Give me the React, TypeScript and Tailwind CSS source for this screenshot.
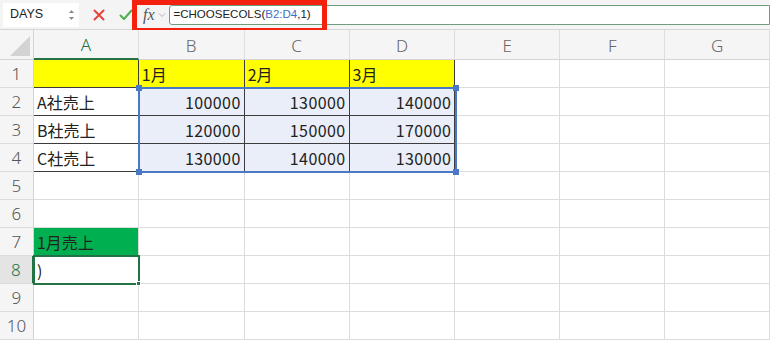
import React from "react";

const COLS = ["A", "B", "C", "D", "E", "F", "G"];
const COLW = [105, 106, 105, 106, 105, 105, 105];

type Cell = { t?: string; right?: boolean; bg?: string; table?: boolean; sel?: boolean };

const data: Record<string, Cell> = {
  A1: { bg: "bg-[#ffff00]", table: true },
  B1: { t: "1月", bg: "bg-[#ffff00]", table: true },
  C1: { t: "2月", bg: "bg-[#ffff00]", table: true },
  D1: { t: "3月", bg: "bg-[#ffff00]", table: true },
  A2: { t: "A社売上", table: true },
  A3: { t: "B社売上", table: true },
  A4: { t: "C社売上", table: true },
  B2: { t: "100000", right: true, table: true, sel: true },
  C2: { t: "130000", right: true, table: true, sel: true },
  D2: { t: "140000", right: true, table: true, sel: true },
  B3: { t: "120000", right: true, table: true, sel: true },
  C3: { t: "150000", right: true, table: true, sel: true },
  D3: { t: "170000", right: true, table: true, sel: true },
  B4: { t: "130000", right: true, table: true, sel: true },
  C4: { t: "140000", right: true, table: true, sel: true },
  D4: { t: "130000", right: true, table: true, sel: true },
  A7: { t: "1月売上", bg: "bg-[#00b050]" },
  A8: { t: ")" },
};

const cellFont = { fontFamily: '"Noto Sans CJK JP", "Noto Sans", sans-serif' };

export default function App() {
  return (
    <div className="relative w-[770px] h-[341px] overflow-hidden bg-white">
      {/* toolbar */}
      <div className="h-[30px] flex items-center bg-[#f4f4f4] border-b border-[#d6d6d6]" style={{ fontFamily: '"Liberation Sans", Arial, sans-serif' }}>
        <div className="ml-[3px] w-[76px] h-[24px] bg-white flex items-center justify-between pl-[7px] pr-[4px]">
          <span className="text-[12.5px] text-[#222]">DAYS</span>
          <svg width="7" height="14" viewBox="0 0 7 14">
            <path d="M1 5 L3.5 2 L6 5 Z" fill="#8a8a8a" />
            <path d="M1 9 L3.5 12 L6 9 Z" fill="#8a8a8a" />
          </svg>
        </div>
        <div className="ml-[13px] w-[14px] flex items-center justify-center">
          <svg width="12" height="12" viewBox="0 0 12 12">
            <path d="M1.5 1.5 L10.5 10.5 M10.5 1.5 L1.5 10.5" stroke="#e5433d" strokeWidth="2" strokeLinecap="round" />
          </svg>
        </div>
        <div className="ml-[13px] w-[14px] flex items-center justify-center">
          <svg width="14" height="12" viewBox="0 0 14 12">
            <path d="M1.5 6.5 L5 10 L12.5 1.5" stroke="#4caf50" strokeWidth="2" fill="none" strokeLinecap="round" strokeLinejoin="round" />
          </svg>
        </div>
        <div className="ml-[10px] flex items-center">
          <span className="text-[16px] italic text-[#555]" style={{ fontFamily: '"Liberation Serif", "Times New Roman", serif' }}>fx</span>
          <svg className="ml-[3px]" width="8" height="6" viewBox="0 0 8 6">
            <path d="M1 1.5 L4 4.5 L7 1.5" stroke="#b5b5b5" strokeWidth="1" fill="none" />
          </svg>
        </div>
        <div className="ml-[3px] flex-1 h-[20px] bg-white border border-[#6e9f7d] rounded-l-[3px] flex items-center pl-[4px] text-[11.5px] text-[#222]">
          <span>=CHOOSECOLS(</span>
          <span className="text-[#3b6fc6]">B2:D4</span>
          <span>,1)</span>
        </div>
      </div>

      {/* red annotation box */}
      <div className="absolute left-[132px] top-0 w-[195px] h-[33px] border-[5px] border-[#f5210f] pointer-events-none" />

      {/* grid */}
      <div className="relative" style={cellFont}>
        {/* header row */}
        <div className="flex h-[30px] bg-[#f5f5f5]">
          <div className="relative w-[34px] h-full border-r border-b border-[#d4d4d4]">
            <svg className="absolute right-[3px] bottom-[3px]" width="20" height="20" viewBox="0 0 20 20">
              <path d="M20 0 L20 20 L0 20 Z" fill="#d3d3d3" />
            </svg>
          </div>
          {COLS.map((c, i) => (
            <div
              key={c}
              className={`h-full flex items-center justify-center pt-[2px] text-[17px] font-light border-r border-[#dedede] ${
                c === "A" ? "text-[#217346] border-b-2 border-b-[#217346]" : "text-[#666] border-b border-b-[#d4d4d4]"
              }`}
              style={{ width: COLW[i], fontFamily: '"Noto Sans", sans-serif' }}
            >
              {c}
            </div>
          ))}
        </div>

        {Array.from({ length: 10 }, (_, r) => {
          const row = r + 1;
          const active = row === 8;
          return (
            <div key={row} className="flex h-[28px]">
              <div
                className={`w-[34px] h-full flex items-center justify-center text-[17px] font-light border-b border-[#dcdcdc] ${
                  active ? "bg-[#e4e4e4] text-[#217346] border-r-2 border-r-[#217346]" : "bg-[#f5f5f5] text-[#555] border-r border-r-[#d4d4d4]"
                }`}
                style={{ fontFamily: '"Noto Sans", sans-serif' }}
              >
                {row}
              </div>
              {COLS.map((c, i) => {
                const cell = data[`${c}${row}`];
                const inTable = cell?.table;
                const bg = cell?.bg ?? (cell?.sel ? "bg-[#e9eef8]" : "bg-white");
                return (
                  <div
                    key={c}
                    className={`h-full flex items-center text-[16px] text-[#222] ${bg} ${
                      inTable ? "border-r border-b border-[#3c3c3c]" : "border-r border-b border-[#dcdcdc]"
                    } ${cell?.right ? "justify-end pr-[3px] text-[16.5px] tracking-[0.4px]" : "pl-[3px]"}`}
                    style={{ width: COLW[i] }}
                  >
                    {cell?.t ?? ""}
                  </div>
                );
              })}
            </div>
          );
        })}

        {/* selection B2:D4 */}
        <div className="absolute left-[138px] top-[57px] w-[319px] h-[86px] border-2 border-[#4a78c4] pointer-events-none">
          <div className="absolute -left-[4px] -top-[4px] w-[6px] h-[6px] bg-[#4a78c4]" />
          <div className="absolute -right-[4px] -top-[4px] w-[6px] h-[6px] bg-[#4a78c4]" />
          <div className="absolute -left-[4px] -bottom-[4px] w-[6px] h-[6px] bg-[#4a78c4]" />
          <div className="absolute -right-[4px] -bottom-[4px] w-[6px] h-[6px] bg-[#4a78c4]" />
        </div>

        {/* active cell A8 */}
        <div className="absolute left-[33px] top-[225px] w-[107px] h-[30px] border-2 border-[#217346] pointer-events-none">
          <div className="absolute -right-[3px] -bottom-[3px] w-[5px] h-[5px] bg-[#217346] border border-white" />
        </div>
      </div>
    </div>
  );
}
